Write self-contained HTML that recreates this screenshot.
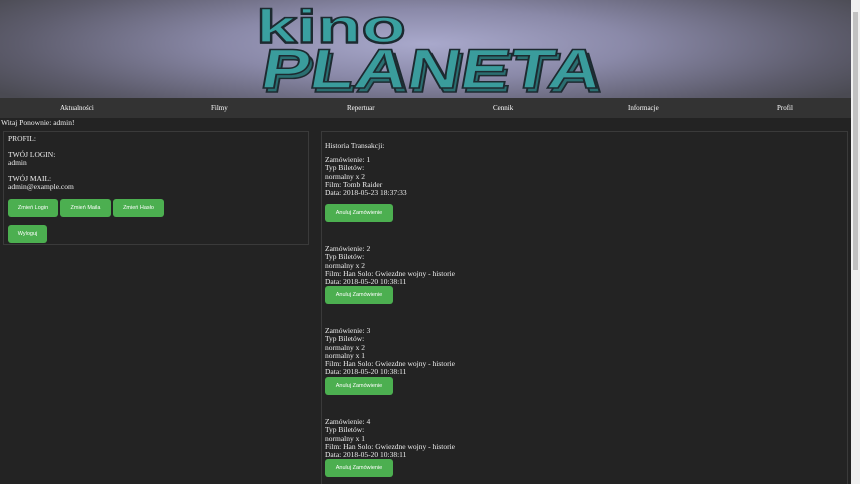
<!DOCTYPE html>
<html><head><meta charset="utf-8"><style>
*{margin:0;padding:0;box-sizing:border-box}
html,body{width:860px;height:484px;overflow:hidden}
body{background:#232323;font-family:"Liberation Serif",serif;font-size:8px;color:#eee;position:relative}
#hdr{position:absolute;left:0;top:0;width:851px;height:98px;background:radial-gradient(ellipse 60% 90% at 50% 45%,#a9a9cc 0%,#8a89a8 40%,#5d5c6c 80%,#4a4a52 100%)}
#nav{position:absolute;left:0;top:98px;width:851px;height:20px;background:#333}
#nav span{position:absolute;top:6px;font-size:7px;color:#fff}
.t{position:absolute;line-height:8.3px;white-space:nowrap;font-size:7.5px}
.btn{position:absolute;background:#4caf50;color:#fff;font-family:"Liberation Sans",sans-serif;font-size:5.5px;border-radius:3px;display:flex;align-items:center;justify-content:center;height:18px}
.box{position:absolute;border:1px solid #3a3a3a}
#sb{position:absolute;left:851px;top:0;width:9px;height:484px;background:#f0f0f0}
#sb div{position:absolute;left:2px;top:12px;width:5px;height:258px;background:#c1c1c1}
</style></head><body>
<div id="hdr">
<svg width="851" height="98" style="position:absolute;left:0;top:0">
<g font-family="Liberation Sans,sans-serif" font-weight="bold" stroke="#1d2a30" stroke-width="1.5" lengthAdjust="spacingAndGlyphs">
<text x="256" y="43" font-size="46" textLength="150" lengthAdjust="spacingAndGlyphs" fill="#2f8a8a">kino</text>
<text x="256" y="42" font-size="46" textLength="150" lengthAdjust="spacingAndGlyphs" fill="#3aa0a0">kino</text>
<text x="262" y="92" font-size="56" textLength="340" lengthAdjust="spacingAndGlyphs" fill="#2a6e70" transform="skewX(-10) translate(16,0)">PLANETA</text>
<text x="258" y="88" font-size="56" textLength="340" lengthAdjust="spacingAndGlyphs" fill="#3a9c9c" transform="skewX(-10) translate(16,0)">PLANETA</text>
</g></svg>
</div>
<div id="nav">
<span style="left:60px">Aktualności</span><span style="left:211px">Filmy</span><span style="left:347px">Repertuar</span><span style="left:493px">Cennik</span><span style="left:628px">Informacje</span><span style="left:777px">Profil</span>
</div>
<div class="t" style="left:1px;top:119px">Witaj Ponownie: admin!</div>
<div class="box" style="left:3px;top:131px;width:306px;height:114px"></div>
<div class="t" style="left:8px;top:135px">PROFIL:</div>
<div class="t" style="left:8px;top:151px">TWÓJ LOGIN:<br>admin</div>
<div class="t" style="left:8px;top:175px">TWÓJ MAIL:<br>admin@example.com</div>
<div class="btn" style="left:8px;top:199px;width:50px">Zmień Login</div>
<div class="btn" style="left:60px;top:199px;width:51px">Zmień Maila</div>
<div class="btn" style="left:113px;top:199px;width:51px">Zmień Hasło</div>
<div class="btn" style="left:8px;top:225px;width:39px">Wyloguj</div>
<div class="box" style="left:321px;top:131px;width:527px;height:360px"></div>
<div class="t" style="left:325px;top:142px">Historia Transakcji:</div>
<div class="t" style="left:325px;top:156px">Zamówienie: 1<br>Typ Biletów:<br>normalny x 2<br>Film: Tomb Raider<br>Data: 2018-05-23 18:37:33</div>
<div class="btn" style="left:325px;top:204px;width:68px">Anuluj Zamówienie</div>
<div class="t" style="left:325px;top:245px">Zamówienie: 2<br>Typ Biletów:<br>normalny x 2<br>Film: Han Solo: Gwiezdne wojny - historie<br>Data: 2018-05-20 10:38:11</div>
<div class="btn" style="left:325px;top:286px;width:68px">Anuluj Zamówienie</div>
<div class="t" style="left:325px;top:327px">Zamówienie: 3<br>Typ Biletów:<br>normalny x 2<br>normalny x 1<br>Film: Han Solo: Gwiezdne wojny - historie<br>Data: 2018-05-20 10:38:11</div>
<div class="btn" style="left:325px;top:377px;width:68px">Anuluj Zamówienie</div>
<div class="t" style="left:325px;top:418px">Zamówienie: 4<br>Typ Biletów:<br>normalny x 1<br>Film: Han Solo: Gwiezdne wojny - historie<br>Data: 2018-05-20 10:38:11</div>
<div class="btn" style="left:325px;top:459px;width:68px">Anuluj Zamówienie</div>
<div id="sb"><div></div></div>
</body></html>
